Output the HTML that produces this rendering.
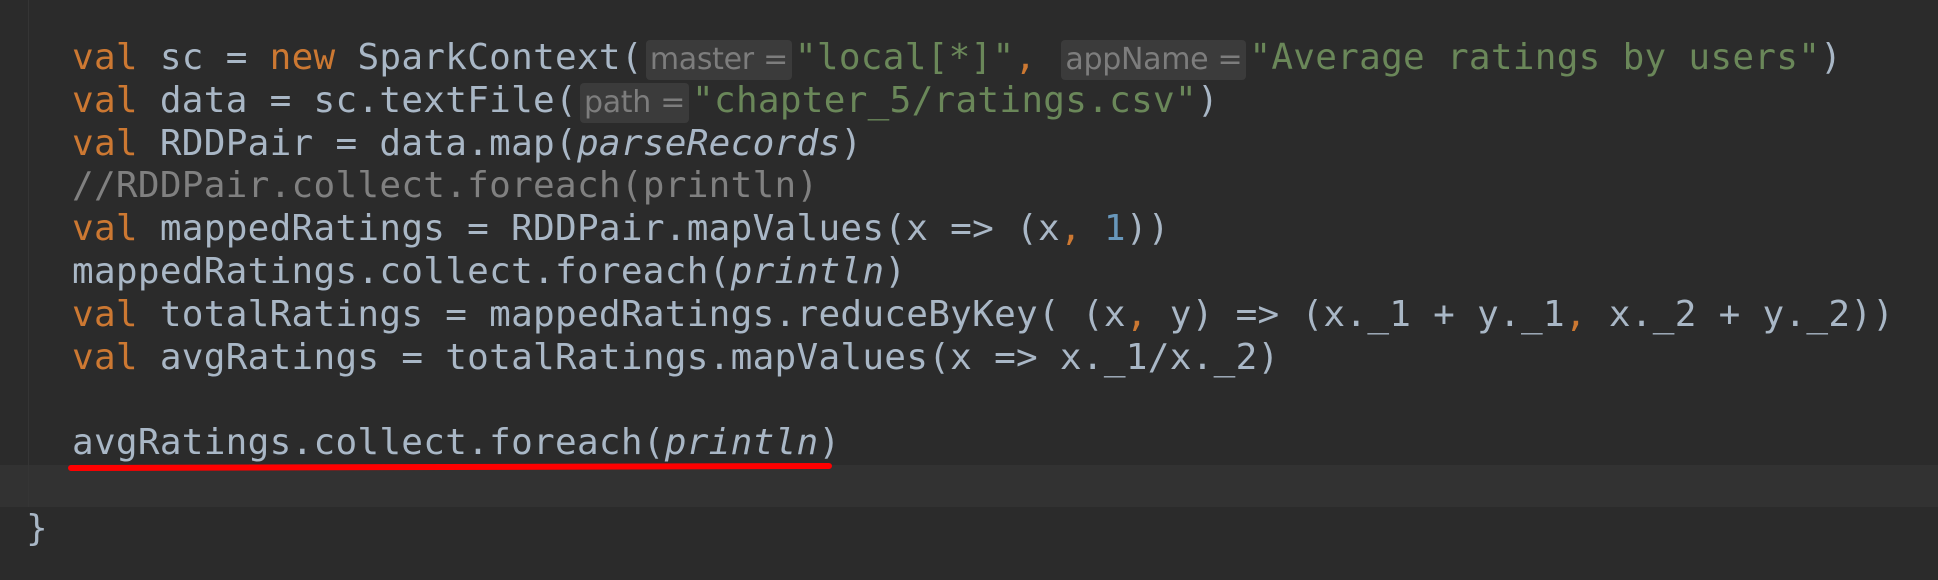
<!DOCTYPE html>
<html><head><meta charset="utf-8"><style>
html,body{margin:0;padding:0;width:1938px;height:580px;background:#2b2b2b;overflow:hidden}
.cur{position:absolute;left:0;top:465px;width:1938px;height:42px;background:#323232}
.gut{position:absolute;left:28px;top:0;width:1px;height:507px;background:#353535}
.l{position:absolute;left:72px;font-family:"DejaVu Sans Mono","Liberation Mono",monospace;font-size:36px;letter-spacing:0.28px;line-height:43px;color:#a9b7c6;white-space:pre}
.k{color:#cc7832}.s{color:#6a8759}.c{color:#808080}.n{color:#6897bb}.i{font-style:italic}
.h{display:inline-block;background:#3b3b3b;color:#7d7d7d;font-family:"DejaVu Sans","Liberation Sans",sans-serif;font-size:30px;letter-spacing:-0.3px;line-height:40px;padding:0 4px;border-radius:4px;margin:0 3px 0 3px;vertical-align:0px}
.red{position:absolute;left:68px;top:464px;width:764px;height:6px;background:#ff0000;border-radius:3px;transform:rotate(-0.15deg)}
</style></head><body>
<div class="cur"></div><div class="gut"></div>
<div class="l" style="top:36px"><span class="k">val</span> sc = <span class="k">new</span> SparkContext(<span class="h">master =</span><span class="s">"local[*]"</span><span class="k">,</span> <span class="h">appName =</span><span class="s">"Average ratings by users"</span>)</div>
<div class="l" style="top:79px"><span class="k">val</span> data = sc.textFile(<span class="h">path =</span><span class="s">"chapter_5/ratings.csv"</span>)</div>
<div class="l" style="top:122px"><span class="k">val</span> RDDPair = data.map(<span class="i">parseRecords</span>)</div>
<div class="l c" style="top:164px">//RDDPair.collect.foreach(println)</div>
<div class="l" style="top:207px"><span class="k">val</span> mappedRatings = RDDPair.mapValues(x =&gt; (x<span class="k">,</span> <span class="n">1</span>))</div>
<div class="l" style="top:250px">mappedRatings.collect.foreach(<span class="i">println</span>)</div>
<div class="l" style="top:293px"><span class="k">val</span> totalRatings = mappedRatings.reduceByKey( (x<span class="k">,</span> y) =&gt; (x._1 + y._1<span class="k">,</span> x._2 + y._2))</div>
<div class="l" style="top:336px"><span class="k">val</span> avgRatings = totalRatings.mapValues(x =&gt; x._1/x._2)</div>
<div class="l" style="top:421px">avgRatings.collect.foreach(<span class="i">println</span>)</div>
<div class="red"></div>
<div class="l" style="top:507px;left:26px">}</div>
</body></html>
